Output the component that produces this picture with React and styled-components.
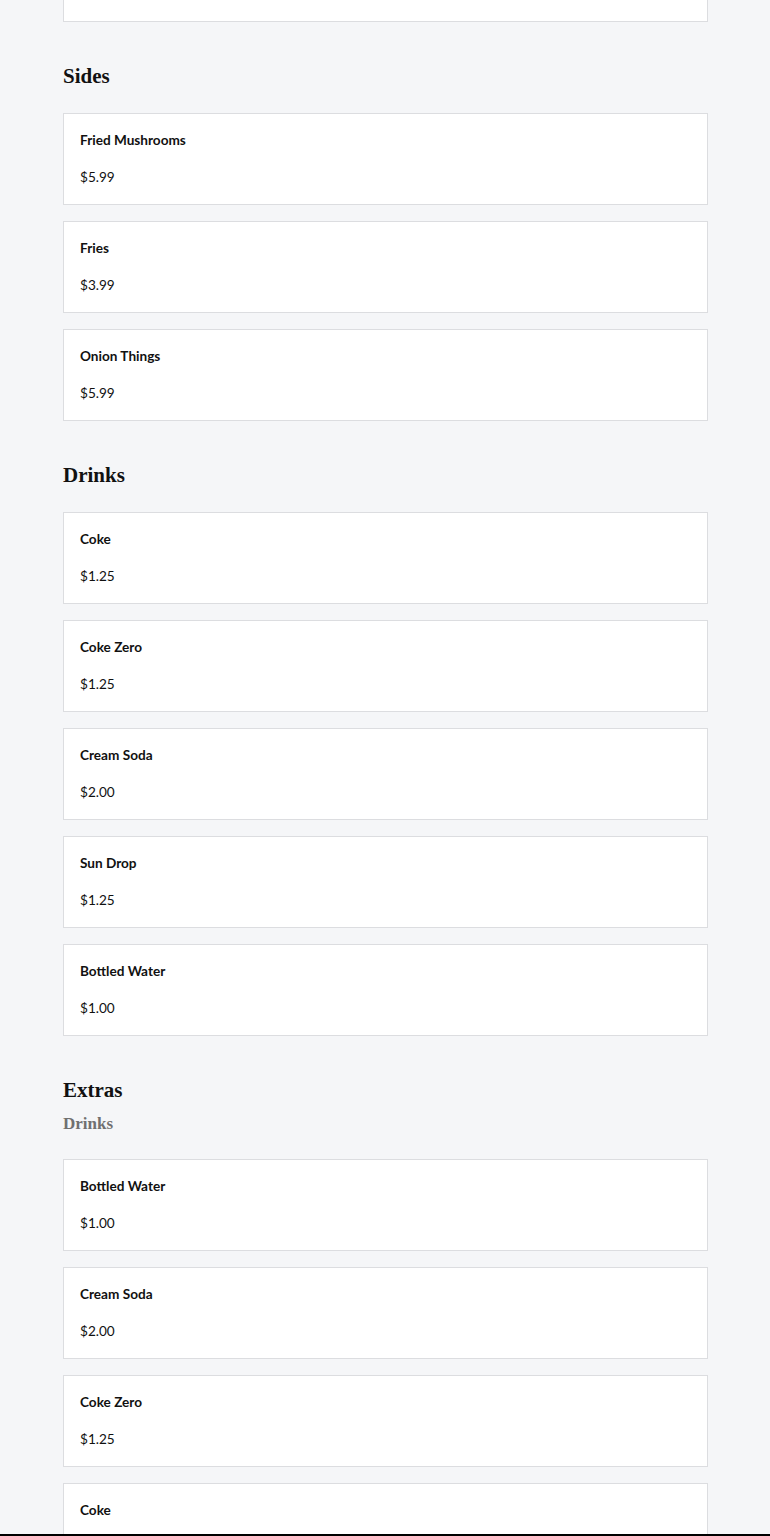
import React from "react";
import styled, { createGlobalStyle } from "styled-components";

const Global = createGlobalStyle`
  html, body { margin: 0; padding: 0; background: #f5f6f8; }
  body { font-family: "Lato", "Open Sans", sans-serif; color: #111; }
`;

const Page = styled.div`
  width: 645px;
  margin: 0 auto 0 63px;
  padding-bottom: 40px;
`;

const Section = styled.section`
  display: flex;
  flex-direction: column;
`;

const Heading = styled.h2`
  font-family: "Liberation Serif", "DejaVu Serif", serif;
  font-weight: bold;
  font-size: 21px;
  line-height: 28px;
  margin: 40px 0 ${(p) => (p.$tight ? "9px" : "23px")};
  color: #111;
`;

const SubHeading = styled.h3`
  font-family: "Liberation Serif", "DejaVu Serif", serif;
  font-weight: bold;
  font-size: 17px;
  line-height: 22px;
  margin: 0 0 24px;
  color: #707070;
`;

const List = styled.div`
  display: flex;
  flex-direction: column;
  gap: 16px;
`;

const Card = styled.div`
  background: #fff;
  border: 1px solid #dcdde0;
  padding: 15px 16px 16px;
  display: flex;
  flex-direction: column;
  gap: 15px;
  box-sizing: border-box;
`;

const Name = styled.div`
  font-weight: bold;
  font-size: 13.6px;
  line-height: 22px;
`;

const Price = styled.div`
  font-size: 13.6px;
  line-height: 22px;
`;

const TopCard = styled.div`
  background: #fff;
  border: 1px solid #dcdde0;
  border-top: none;
  height: 22px;
  box-sizing: border-box;
`;

const BottomBar = styled.div`
  position: fixed;
  left: 0;
  right: 0;
  bottom: 0;
  height: 2px;
  background: #000;
`;

const sections = [
  {
    title: "Sides",
    items: [
      ["Fried Mushrooms", "$5.99"],
      ["Fries", "$3.99"],
      ["Onion Things", "$5.99"],
    ],
  },
  {
    title: "Drinks",
    items: [
      ["Coke", "$1.25"],
      ["Coke Zero", "$1.25"],
      ["Cream Soda", "$2.00"],
      ["Sun Drop", "$1.25"],
      ["Bottled Water", "$1.00"],
    ],
  },
  {
    title: "Extras",
    sub: "Drinks",
    items: [
      ["Bottled Water", "$1.00"],
      ["Cream Soda", "$2.00"],
      ["Coke Zero", "$1.25"],
      ["Coke", "$1.25"],
    ],
  },
];

export default function App() {
  return (
    <>
      <Global />
      <Page>
        <TopCard />
        {sections.map((s) => (
          <Section key={s.title}>
            <Heading $tight={!!s.sub}>{s.title}</Heading>
            {s.sub && <SubHeading>{s.sub}</SubHeading>}
            <List>
              {s.items.map(([n, p], i) => (
                <Card key={i}>
                  <Name>{n}</Name>
                  <Price>{p}</Price>
                </Card>
              ))}
            </List>
          </Section>
        ))}
      </Page>
      <BottomBar />
    </>
  );
}
